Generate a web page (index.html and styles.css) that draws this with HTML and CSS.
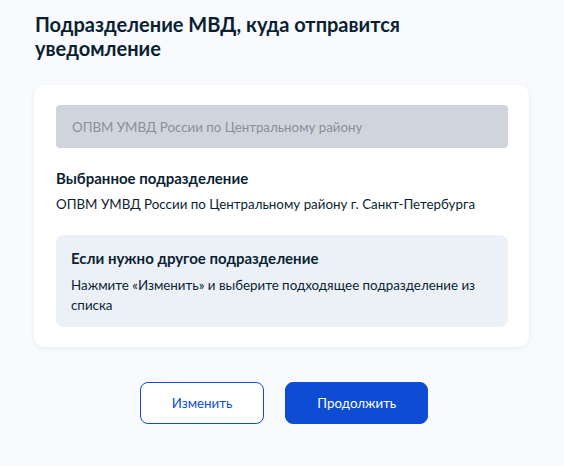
FILE: index.html
```html
<!DOCTYPE html>
<html lang="ru">
<head>
<meta charset="utf-8">
<title>Подразделение МВД</title>
<link rel="stylesheet" href="styles.css">
</head>
<body>
<main class="page">
  <h1 class="title">Подразделение МВД, куда отправится уведомление</h1>
  <section class="card">
    <div class="field">ОПВМ УМВД России по Центральному району</div>
    <h2 class="label">Выбранное подразделение</h2>
    <p class="value">ОПВМ УМВД России по Центральному району г. Санкт-Петербурга</p>
    <div class="info">
      <h3 class="info-title">Если нужно другое подразделение</h3>
      <p class="info-text">Нажмите «Изменить» и выберите подходящее подразделение из списка</p>
    </div>
  </section>
  <div class="actions">
    <button class="btn btn-outline" type="button">Изменить</button>
    <button class="btn btn-primary" type="button">Продолжить</button>
  </div>
</main>
</body>
</html>
```

FILE: styles.css
```css
html, body {
  margin: 0;
  padding: 0;
  background: #f8fafd;
}

body {
  font-family: Lato, "Noto Sans", sans-serif;
  color: #0b1f33;
  width: 564px;
  height: 466px;
  overflow: hidden;
}

.page {
  padding: 12px 35px 0 34px;
}

.title {
  margin: 0 0 25px 1px;
  width: 400px;
  font-size: 20px;
  line-height: 24px;
  font-weight: 700;
}

.card {
  background: #ffffff;
  border-radius: 10px;
  box-shadow: 0 1px 5px rgba(30, 60, 120, 0.08);
  padding: 20px 21px 20px 22px;
}

.field {
  height: 43px;
  box-sizing: border-box;
  background: #d0d5dd;
  border-radius: 4px;
  padding: 0 16px;
  display: flex;
  align-items: center;
  font-size: 13.3px;
  color: #86909c;
}

.label {
  margin: 18px 0 4px;
  font-size: 15px;
  line-height: 24px;
  font-weight: 700;
}

.value {
  margin: 0 0 21px;
  font-size: 13.35px;
  line-height: 20px;
}

.info {
  background: #ecf1f8;
  border-radius: 8px;
  padding: 12px 15px;
}

.info-title {
  margin: 0 0 6px;
  font-size: 15px;
  line-height: 22px;
  font-weight: 700;
}

.info-text {
  margin: 0;
  font-size: 13.35px;
  line-height: 20px;
}

.actions {
  display: flex;
  justify-content: center;
  gap: 21px;
  margin: 35px 0 0 -32px;
  width: 564px;
}

.btn {
  height: 42px;
  padding: 0 31px;
  border-radius: 8px;
  font-family: Lato, "Noto Sans", sans-serif;
  font-size: 13.3px;
  cursor: pointer;
}

.btn-outline {
  background: #ffffff;
  border: 1px solid #0d4cd3;
  color: #0d4cd3;
}

.btn-primary {
  background: #0d4cd3;
  border: 1px solid #0d4cd3;
  color: #ffffff;
}
```
